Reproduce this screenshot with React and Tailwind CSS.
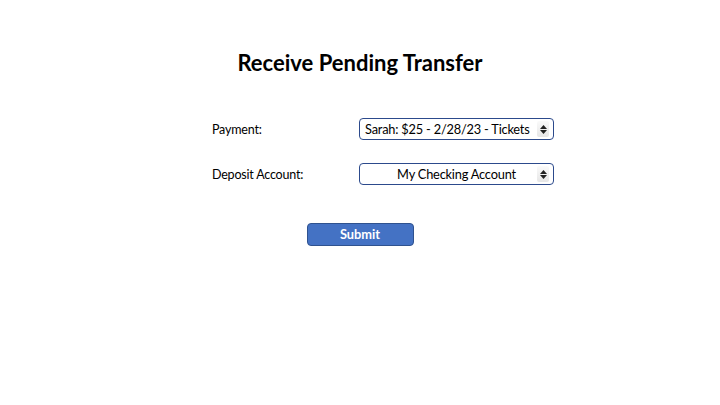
import React from 'react';

const font = { fontFamily: 'Lato, "Open Sans", "Liberation Sans", sans-serif' };

const FakeSelect = ({ value, align = 'left' }) => (
  <div
    className={`relative flex h-[22px] w-[195px] items-center rounded-[4px] border border-[#2c4a8c] bg-white pr-[18px] text-[12.8px] tracking-[-0.2px] text-black ${
      align === 'center' ? 'justify-center pl-[18px]' : 'pl-[5px]'
    }`}
  >
    <span className="whitespace-nowrap pt-[2px]">{value}</span>
    <span className="absolute right-[4px] top-[2px] flex h-[16px] w-[12px] flex-col items-center justify-center gap-[1px] rounded-[2px] bg-gradient-to-b from-[#fafafa] to-[#e6e6e6]">
      <svg width="7" height="4" viewBox="0 0 7 4"><path d="M0 4 L3.5 0 L7 4 Z" fill="#222" /></svg>
      <svg width="7" height="4" viewBox="0 0 7 4"><path d="M0 0 L3.5 4 L7 0 Z" fill="#222" /></svg>
    </span>
  </div>
);

export default function App() {
  return (
    <div className="h-[405px] w-[720px] bg-white" style={font}>
      <div className="flex flex-col items-center pt-[48px]">
        <h1 className="text-[22px] font-bold leading-[30px] text-black">Receive Pending Transfer</h1>

        <div className="ml-[44px] mt-[40px] flex w-[344px] flex-col gap-[23px]">
          <div className="flex items-center justify-between">
            <span className="pl-[2px] pt-[3px] text-[12.5px] tracking-[-0.2px]">Payment:</span>
            <FakeSelect value="Sarah: $25 - 2/28/23 - Tickets" />
          </div>
          <div className="flex items-center justify-between">
            <span className="pl-[2px] pt-[3px] text-[12.5px] tracking-[-0.2px]">Deposit Account:</span>
            <FakeSelect value="My Checking Account" align="center" />
          </div>
        </div>

        <button className="mt-[38px] h-[23px] w-[107px] rounded-[4px] border border-[#2f528f] bg-[#4472c4] pt-[1px] text-[12.8px] font-bold text-white">
          Submit
        </button>
      </div>
    </div>
  );
}
